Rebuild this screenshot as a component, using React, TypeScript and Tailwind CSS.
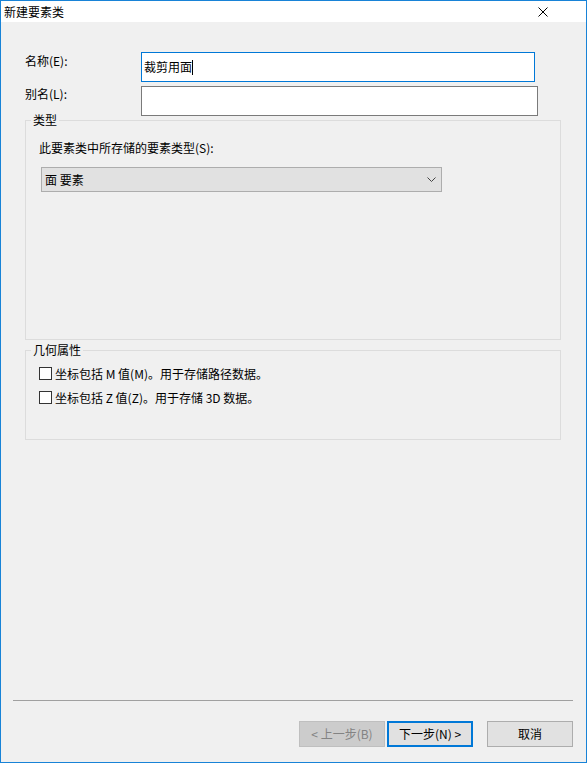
const FONT = "font-['Microsoft_YaHei_UI','Noto_Sans_CJK_SC',sans-serif]"

function CloseIcon() {
  return (
    <svg width="10" height="10" viewBox="0 0 10 10" className="block">
      <path d="M0.5 0.5 L9.5 9.5 M9.5 0.5 L0.5 9.5" stroke="#000" strokeWidth="1" fill="none" />
    </svg>
  )
}

function Chevron() {
  return (
    <svg width="9" height="5" viewBox="0 0 9 5" className="block">
      <path d="M0.5 0.5 L4.5 4.5 L8.5 0.5" stroke="#444" strokeWidth="1" fill="none" />
    </svg>
  )
}

function CheckRow({ label }: { label: string }) {
  return (
    <div className="flex items-center h-[13px]">
      <span className="w-[13px] h-[13px] border border-[#333333] bg-white shrink-0" />
      <span className="ml-[3px] leading-[14px] whitespace-pre">{label}</span>
    </div>
  )
}

export default function App() {
  return (
    <div className={`w-[587px] h-[763px] border border-[#1883d7] bg-[#f0f0f0] flex flex-col text-[12px] text-black ${FONT}`}>
      {/* Title bar */}
      <div className="h-[21px] bg-white flex items-center justify-between pl-[3px] pr-[38px] shrink-0">
        <span className="leading-[14px]">新建要素类</span>
        <CloseIcon />
      </div>

      <div className="flex-1 flex flex-col">
        <div className="pl-[24px] pt-[30px] flex flex-col">
          {/* Name */}
          <div className="flex items-start">
            <span className="w-[116px] pt-[2px] leading-[14px]">名称(E):</span>
            <div className="w-[394px] h-[30px] border border-[#0078d7] bg-white flex items-center pl-[2px]">
              <span className="leading-[14px]">裁剪用面</span>
              <span className="w-px h-[15px] bg-black" />
            </div>
          </div>
          {/* Alias */}
          <div className="flex items-start mt-[4px]">
            <span className="w-[116px] pt-[1px] leading-[14px]">别名(L):</span>
            <div className="w-[397px] h-[30px] border border-[#7a7a7a] bg-white" />
          </div>

          {/* 类型 */}
          <fieldset className="mt-[-3px] w-[536px] h-[227px] border border-[#dcdcdc] px-[13px]">
            <legend className="ml-[-8px] px-[2px] leading-[14px]">类型</legend>
            <div className="mt-[14px] leading-[14px]">此要素类中所存储的要素类型(S):</div>
            <div className="mt-[12px] ml-[2px] w-[401px] h-[25px] bg-[#e1e1e1] border border-[#adadad] flex items-center justify-between pl-[3px] pr-[5px]">
              <span className="leading-[14px]">面 要素</span>
              <Chevron />
            </div>
          </fieldset>

          {/* 几何属性 */}
          <fieldset className="mt-[3px] w-[536px] h-[97px] border border-[#dcdcdc] px-[13px]">
            <legend className="ml-[-8px] px-[2px] leading-[14px]">几何属性</legend>
            <div className="mt-[10px] flex flex-col gap-[11px]">
              <CheckRow label="坐标包括 M 值(M)。用于存储路径数据。" />
              <CheckRow label="坐标包括 Z 值(Z)。用于存储 3D 数据。" />
            </div>
          </fieldset>
        </div>

        {/* Separator + buttons */}
        <div className="mt-auto ml-[12px] mr-[13px] border-t border-[#a0a0a0]" />
        <div className="flex justify-end pr-[13px] mt-[20px] mb-[15px]">
          <button className="w-[86px] h-[26px] bg-[#cccccc] border border-[#bfbfbf] text-[#838383] leading-[14px]">
            &lt; 上一步(B)
          </button>
          <button className="ml-[2px] w-[86px] h-[26px] bg-[#e1e1e1] border-2 border-[#0078d7] leading-[14px]">
            下一步(N) &gt;
          </button>
          <button className="ml-[14px] w-[86px] h-[26px] bg-[#e1e1e1] border border-[#adadad] leading-[14px]">
            取消
          </button>
        </div>
      </div>
    </div>
  )
}
